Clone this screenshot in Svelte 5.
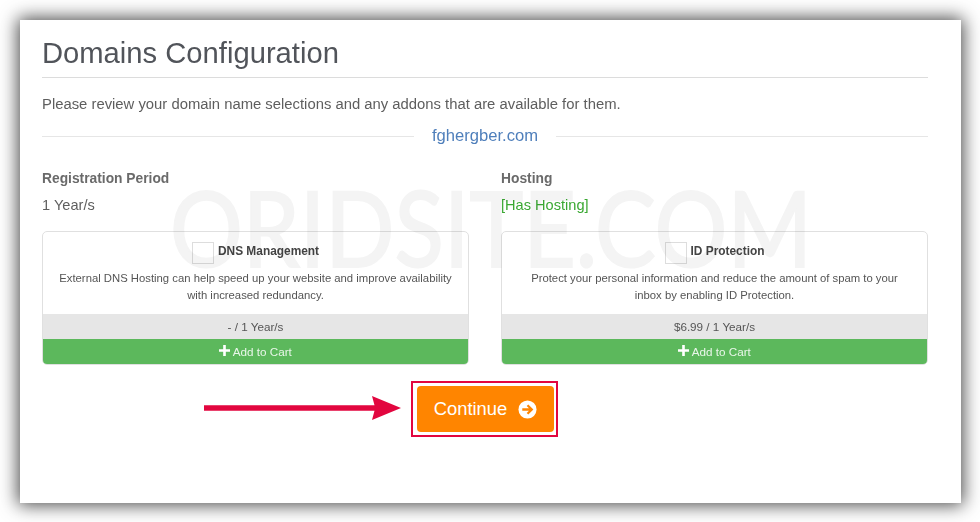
<script>
  const addons = [
    {
      title: 'DNS Management',
      text: 'External DNS Hosting can help speed up your website and improve availability with increased redundancy.',
      price: '- / 1 Year/s'
    },
    {
      title: 'ID Protection',
      text: 'Protect your personal information and reduce the amount of spam to your inbox by enabling ID Protection.',
      price: '$6.99 / 1 Year/s'
    }
  ];
</script>

<div class="page">
  <main class="panel">
    <div class="content">
      <h1>Domains Configuration</h1>
      <p class="intro">Please review your domain name selections and any addons that are available for them.</p>

      <div class="domain">
        <span class="rule"></span>
        <a href="#domain">fghergber.com</a>
        <span class="rule"></span>
      </div>

      <div class="columns info">
        <div>
          <div class="label">Registration Period</div>
          <div class="value">1 Year/s</div>
        </div>
        <div>
          <div class="label">Hosting</div>
          <div class="value green">[Has Hosting]</div>
        </div>
      </div>

      <div class="columns">
        {#each addons as addon}
          <section class="card">
            <div class="body">
              <div class="head">
                <span class="check"></span>
                <strong>{addon.title}</strong>
              </div>
              <p>{addon.text}</p>
            </div>
            <div class="price">{addon.price}</div>
            <button class="add">
              <svg viewBox="0 0 10 10" width="11" height="11"><path d="M3.800 0h2.400v3.800H10v2.400H6.200V10H3.800V6.200H0V3.800h3.800z" fill="#fff" /></svg>
              Add to Cart
            </button>
          </section>
        {/each}
      </div>

      <div class="actions">
        <div class="highlight">
          <svg class="arrow" viewBox="0 0 197 26" width="197" height="26">
            <path d="M0 10.300h170.500L168 1l29 12-29 12 2.500-9.300H0z" fill="#e2063f" />
          </svg>
          <button class="continue">
            Continue
            <svg viewBox="0 0 20 20" width="19" height="19">
              <circle cx="10" cy="10" r="9.500" fill="#fff" />
              <path d="M4.500 10h9M10 5.500l4.500 4.500-4.500 4.500" fill="none" stroke="#ff8500" stroke-width="2.400" />
            </svg>
          </button>
        </div>
      </div>
    </div>

    <div class="watermark">ORIDSITE.COM</div>
  </main>
</div>

<style>
  :global(body) {
    background: #fff;
  }
  .page {
    width: 980px;
    height: 522px;
    padding: 20px 19px 19px 20px;
    box-sizing: border-box;
    overflow: hidden;
    font-family: "Liberation Sans", Arial, sans-serif;
  }
  .panel {
    position: relative;
    height: 483px;
    box-sizing: border-box;
    padding: 0 33px 0 22px;
    background: #fff;
    box-shadow: 0 0 17px 2px rgba(0, 0, 0, 0.72);
    color: #58595b;
  }
  .content {
    filter: blur(0.4px);
  }
  .watermark {
    position: absolute;
    left: 150px;
    top: 151px;
    font-family: Lato, sans-serif;
    font-size: 104px;
    line-height: 112px;
    color: #f4f4f4;
    -webkit-text-stroke: 2px #f4f4f4;
    mix-blend-mode: multiply;
    white-space: nowrap;
    transform: scaleX(0.875);
    transform-origin: left center;
    pointer-events: none;
  }
  h1 {
    margin: 0;
    padding: 17px 0 7px;
    border-bottom: 1px solid #dcdcdc;
    font-size: 29.200px;
    line-height: 33px;
    font-weight: 400;
    color: #51545a;
  }
  .intro {
    margin: 17px 0 0;
    font-size: 14.840px;
    line-height: 18px;
    color: #5e5e5e;
  }
  .domain {
    display: flex;
    align-items: center;
    gap: 18px;
    margin-top: 13px;
    height: 20px;
  }
  .domain a {
    color: #4f7fbb;
    font-size: 16.600px;
    text-decoration: none;
  }
  .rule {
    flex: 1;
    height: 1px;
    background: #e6e6e6;
  }
  .columns {
    display: grid;
    grid-template-columns: 427px 427px;
    gap: 32px;
  }
  .info {
    margin-top: 24px;
    font-size: 14.600px;
    line-height: 18px;
  }
  .label {
    font-size: 13.800px;
    font-weight: 700;
    color: #6a6a6a;
  }
  .value {
    margin-top: 8px;
    color: #5e5e5e;
  }
  .green {
    color: #3aa832;
  }
  .card {
    margin-top: 17px;
    height: 134px;
    box-sizing: border-box;
    display: flex;
    flex-direction: column;
    border: 1px solid #e0e0e0;
    border-radius: 5px;
    overflow: hidden;
    background: #fff;
    text-align: center;
  }
  .body {
    flex: 1;
    padding: 10px 15px 0;
    font-size: 11.300px;
    line-height: 17px;
    color: #555;
  }
  .head {
    display: flex;
    justify-content: center;
    align-items: center;
    gap: 4px;
    height: 22px;
  }
  .head strong {
    margin-top: -4px;
    font-size: 11.900px;
    color: #444;
  }
  .check {
    width: 20px;
    height: 20px;
    border: 1px solid #ddd;
  }
  .body p {
    margin: 6px 0 0;
  }
  .price {
    height: 25px;
    background: #e6e6e6;
    font-size: 11.700px;
    line-height: 25px;
    color: #555;
  }
  .add {
    height: 25px;
    border: 0;
    padding: 0;
    background: #5cb85c;
    color: #e9f6e9;
    font: 11.700px "Liberation Sans", Arial, sans-serif;
  }
  .actions {
    display: flex;
    justify-content: center;
    margin-top: 16px;
    padding-right: 1px;
  }
  .highlight {
    position: relative;
    box-sizing: border-box;
    width: 147px;
    height: 56px;
    padding: 3px 2px 3px 4px;
    border: 2px solid #e2063f;
  }
  .arrow {
    position: absolute;
    left: -209px;
    top: 12px;
  }
  .continue {
    display: flex;
    align-items: center;
    justify-content: center;
    gap: 11px;
    width: 100%;
    height: 100%;
    border: 0;
    padding: 0;
    border-radius: 4px;
    background: #ff8500;
    color: #fff;
    font: 18.400px "Liberation Sans", Arial, sans-serif;
  }
</style>
